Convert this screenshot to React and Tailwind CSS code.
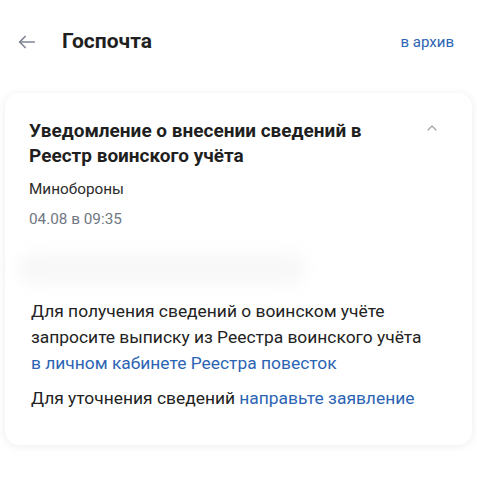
import React from 'react';

export default function App() {
  return (
    <div className="min-h-screen bg-white font-['Roboto',sans-serif] text-[#1f1f1f]">
      <header className="flex items-center h-[44px] mt-[20px] px-[16px]">
        <svg width="22" height="22" viewBox="0 0 24 24" fill="none" stroke="#7d8593" strokeWidth="1.8" strokeLinecap="round" strokeLinejoin="round">
          <path d="M20 12H4" />
          <path d="M10 6l-6 6 6 6" />
        </svg>
        <h1 className="ml-[24px] text-[21px] font-bold">Госпочта</h1>
        <a className="ml-auto mr-[7px] text-[15px] text-[#2c64b4]">в архив</a>
      </header>

      <div className="mx-[5px] mt-[29px] rounded-[14px] bg-white shadow-[0_1px_8px_rgba(0,0,0,0.08)] pt-[25px] pb-[34px] pl-[24px] pr-[30px]">
        <div className="flex">
          <h2 className="flex-1 text-[19px] leading-[25px] font-bold pr-[30px]">
            Уведомление о внесении сведений в Реестр воинского учёта
          </h2>
          <svg className="mt-[2px] mr-[2px]" width="16" height="16" viewBox="0 0 24 24" fill="none" stroke="#a3a9b2" strokeWidth="2" strokeLinecap="round" strokeLinejoin="round">
            <path d="M6 15l6-6 6 6" />
          </svg>
        </div>
        <p className="mt-[11px] text-[15.3px] leading-[20px] text-[#2b2b2b]">Минобороны</p>
        <p className="mt-[10px] text-[15.3px] leading-[20px] text-[#6f7782]">04.08 в 09:35</p>

        <div className="mt-[24px] ml-[-12px] h-[32px] w-[290px] rounded-full bg-[#f8f8f8] blur-[8px]" />

        <div className="mt-[13px] pl-[2px] text-[17.4px] leading-[26px] text-[#222]">
          <p>
            Для получения сведений о воинском учёте запросите выписку из Реестра воинского учёта
            <a className="block text-[#2c64b4]">в личном кабинете Реестра повесток</a>
          </p>
          <p className="mt-[9px]">
            Для уточнения сведений <a className="text-[#2c64b4]">направьте заявление</a>
          </p>
        </div>
      </div>
    </div>
  );
}
